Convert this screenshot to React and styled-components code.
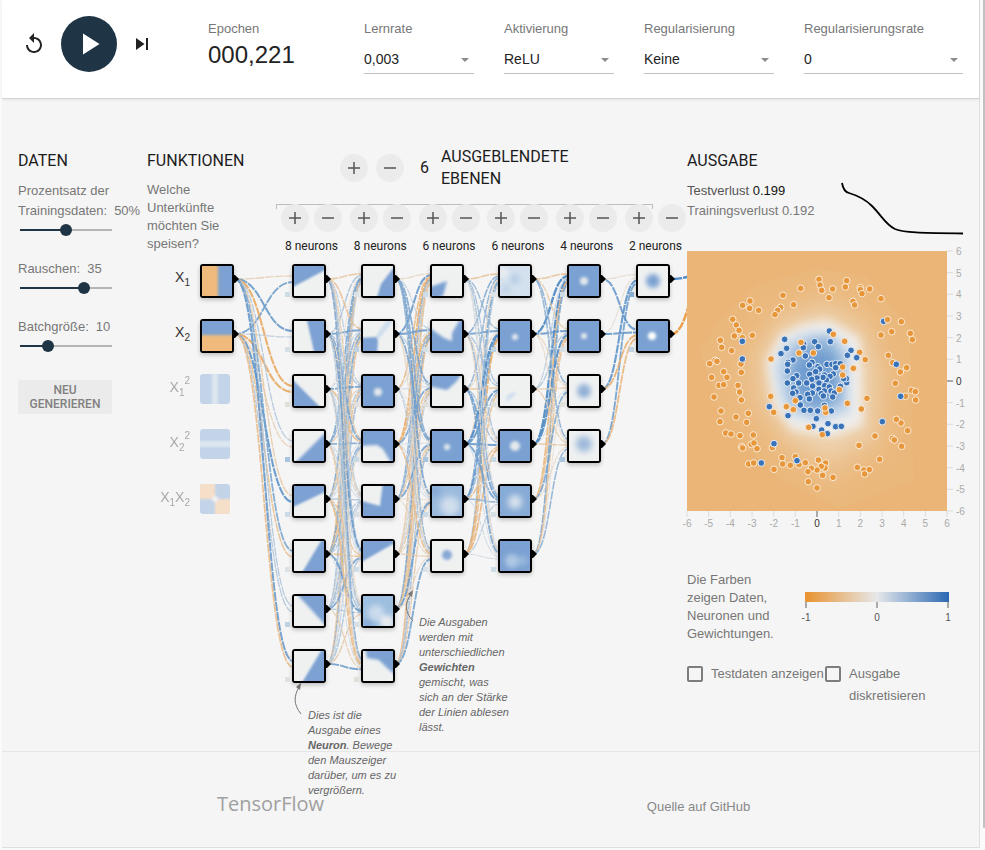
import React, { useState } from "react";
import styled, { createGlobalStyle, css } from "styled-components";

const SANS = '"Liberation Sans", Helvetica, Arial, sans-serif';
const ROBOTO = 'Roboto, "Liberation Sans", sans-serif';
const NAVY = "#1f3545";
const BLUE = "#7ba1d2";
const PALE = "#eff1f1";
const ORANGE = "#f0ba7c";

const GlobalStyle = createGlobalStyle`
  * { box-sizing: border-box; }
  body { margin: 0; background: #fafafa; font-family: ${SANS}; font-size: 13px; color: #777; }
  h1, p { margin: 0; }
  button, select { font: inherit; color: inherit; }
  svg { display: block; }
`;

/* ---------- page frame ---------- */

const Shell = styled.div`
  display: flex;
  gap: 3px;
  padding-left: 2px;
`;

const Page = styled.div`
  flex: 1;
  min-width: 978px;
  background: #f5f5f5;
  border-right: 1px solid #dedede;
  border-bottom: 1px solid #dedede;
`;

const ScrollThumb = styled.div`
  width: 2px;
  height: calc(100vh - 22px);
  background: #c1c1c1;
  border-radius: 0 0 2px 2px;
`;

/* ---------- top bar ---------- */

const TopBar = styled.header`
  display: flex;
  align-items: flex-start;
  padding: 16px 16px 24px;
  background: #fff;
  border-bottom: 1px solid #d4d4d4;
  box-shadow: 0 1px 3px rgba(0, 0, 0, 0.08);
`;

const Transport = styled.div`
  display: flex;
  align-items: center;
  width: 190px;
  color: #222;
`;

const IconButton = styled.button`
  display: grid;
  place-items: center;
  width: 28px;
  height: 28px;
  margin: 0 2px;
  padding: 0;
  border: 0;
  background: none;
  cursor: pointer;
`;

const PlayButton = styled(IconButton)`
  width: 56px;
  height: 56px;
  margin: 0 9px 0 11px;
  border-radius: 50%;
  background: ${NAVY};
  color: #fff;
`;

const Epoch = styled.div`
  width: 156px;
  padding-top: 4px;
`;

const FieldName = styled.span`
  display: block;
  line-height: 18px;
`;

const EpochNumber = styled.output`
  display: block;
  margin-top: 3px;
  font-size: 24px;
  line-height: 28px;
  color: #222;
`;

const Fields = styled.div`
  display: grid;
  flex: 1;
  grid-template-columns: 110px 110px 130px 1fr;
  gap: 30px;
  padding-top: 4px;
`;

const Picker = styled.div`
  display: grid;
  align-items: center;
  height: 28px;
  margin-top: 8px;
  border-bottom: 1px solid #c2c2c2;
  > * { grid-area: 1 / 1; }
  svg { justify-self: end; margin-right: 5px; pointer-events: none; }
`;

const Select = styled.select`
  width: 100%;
  height: 26px;
  padding: 0 0 2px;
  border: 0;
  background: transparent;
  appearance: none;
  font-size: 14px;
  color: #222;
`;

/* ---------- main columns ---------- */

const Main = styled.main`
  display: grid;
  grid-template-columns: 129px 540px 276px;
  justify-content: center;
  padding: 47px 16px 44px;
`;

const Column = styled.section`
  padding-top: 4px;
`;

const Title = styled.h1`
  margin-bottom: 9px;
  font: 400 16px/22px ${ROBOTO};
  color: #1c1c1c;
`;

const SliderBlock = styled.label`
  display: block;
  width: 94px;
  margin-bottom: 20px;
  line-height: 20px;
  span { display: block; white-space: nowrap; }
  b { margin-left: 7px; font-weight: 400; }
`;

const Slider = styled.input`
  display: block;
  width: 92px;
  height: 18px;
  margin: 0 0 0 2px;
  appearance: none;
  background: linear-gradient(to right, ${NAVY} var(--fill), #b5b5b5 var(--fill)) center / 100% 2px no-repeat;
  &::-webkit-slider-thumb {
    appearance: none;
    width: 12px;
    height: 12px;
    border-radius: 50%;
    background: ${NAVY};
  }
`;

const Regenerate = styled.button`
  width: 94px;
  margin-top: 5px;
  padding: 3px 4px;
  border: 0;
  border-radius: 2px;
  background: #ebebeb;
  font: 500 12px/14px ${ROBOTO};
  color: #808080;
`;

const Network = styled.section`
  display: grid;
  grid-template-columns: 129px 411px;
  align-content: start;
`;

const FeatureIntro = styled.div`
  padding-top: 4px;
  p { width: 86px; line-height: 18px; }
`;

const HiddenHeading = styled.div`
  display: flex;
  align-items: center;
  gap: 8px;
  padding-left: 64px;
  font: 400 16px/22px ${ROBOTO};
  color: #1c1c1c;
  h1 { width: 140px; margin-left: 4px; font: inherit; }
  output { margin-left: 8px; }
`;

const Round = styled.button`
  display: grid;
  place-items: center;
  width: 28px;
  height: 28px;
  padding: 0;
  border: 0;
  border-radius: 50%;
  background: #ebebeb;
  color: #555;
`;

const Bracket = styled.div`
  width: 377px;
  height: 5px;
  margin: 14px 0 -5px;
  border: solid #bdbdbd;
  border-width: 1px 1px 0;
`;

const LayerControls = styled.div`
  display: flex;
  justify-content: space-between;
  margin: 0 1px 0 5px;
`;

const LayerControl = styled.div`
  display: grid;
  grid-template-columns: 28px 28px;
  gap: 6px 5px;
  width: 61px;
  span {
    grid-column: 1 / 3;
    font: 400 12px/16px ${ROBOTO};
    color: #222;
    text-align: center;
    white-space: nowrap;
  }
`;

const Canvas = styled.div`
  position: relative;
  z-index: 1;
  display: flex;
  grid-column: 1 / 3;
  padding-top: 10px;
`;

const Links = styled.svg`
  position: absolute;
  inset: 0;
  z-index: -1;
`;

const Stack = styled.div`
  display: flex;
  flex-direction: column;
  gap: 21px;
`;

const FeatureRow = styled.div`
  display: flex;
  align-items: flex-start;
  gap: 10px;
  height: 34px;
  opacity: ${(p) => (p.$on ? 1 : 0.4)};
`;

const FeatureLabel = styled.span`
  display: flex;
  justify-content: flex-end;
  width: 43px;
  padding-top: 4px;
  color: #333;
  font-size: 14px;
  line-height: 18px;
  sub, sup { font-size: 10px; line-height: 10px; }
  sub { align-self: flex-end; margin-bottom: -2px; }
  sup { margin-top: -2px; }
`;

const Layers = styled.div`
  display: flex;
  justify-content: space-between;
  align-items: flex-start;
  width: 378px;
  margin-left: 58px;
`;

const Tile = styled.div`
  position: relative;
  width: ${(p) => (p.$on ? 34 : 30)}px;
  height: ${(p) => (p.$on ? 34 : 30)}px;
  > svg:first-child { border-radius: ${(p) => (p.$on ? 1 : 3)}px; overflow: hidden; }
  ${(p) =>
    p.$on &&
    css`
      border: 2px solid #000;
      border-radius: 3px;
      box-shadow: 0 2px 4px rgba(0, 0, 0, 0.22);
      background: ${PALE};
    `}
`;

const Port = styled.svg`
  position: absolute;
  left: 31px;
  top: 9px;
`;

const Bias = styled.i`
  position: absolute;
  left: -9px;
  top: 26px;
  width: 5px;
  height: 5px;
  background: ${(p) => p.$color};
`;

const Callout = styled.p`
  position: absolute;
  left: ${(p) => p.$x}px;
  top: ${(p) => p.$y}px;
  width: 92px;
  font-size: 11px;
  font-style: italic;
  line-height: 15px;
  color: #666;
  b { font-weight: 700; }
`;

/* ---------- output ---------- */

const LossRow = styled.div`
  display: flex;
  justify-content: space-between;
  height: 64px;
  line-height: 20px;
  strong { font-weight: 400; color: #111; }
  em { font-style: normal; color: #555; }
  p { white-space: nowrap; }
`;

const LegendRow = styled.div`
  display: grid;
  grid-template-columns: 108px 1fr;
  margin-top: 40px;
  line-height: 18px;
  p { width: 94px; }
  svg { margin-top: 21px; }
`;

const Checks = styled.div`
  display: grid;
  grid-template-columns: 138px 1fr;
  margin-top: 20px;
`;

const Check = styled.label`
  display: flex;
  gap: 8px;
  line-height: 22px;
  white-space: ${(p) => (p.$wrap ? "normal" : "nowrap")};
  input {
    flex: none;
    width: 16px;
    height: 16px;
    margin: 3px 0 0;
    appearance: none;
    border: 2px solid #7d7d7d;
    border-radius: 2px;
  }
  input:checked { background: ${NAVY}; }
`;

const Footer = styled.footer`
  display: grid;
  grid-template-columns: 22% 44% 1fr;
  align-items: baseline;
  align-content: center;
  height: 96px;
  padding-top: 8px;
  border-top: 1px solid #e6e6e6;
  a { color: #888; text-decoration: none; }
`;

const Logo = styled.a`
  grid-column: 2;
  justify-self: start;
  font: 500 20px/26px "Open Sans", "Noto Sans", sans-serif;
  && { color: #a0a0a0; }
`;

/* ---------- data ---------- */

const SELECTS = [
  ["Lernrate", ["0,003", "0,01", "0,03"]],
  ["Aktivierung", ["ReLU", "Tanh", "Sigmoid"]],
  ["Regularisierung", ["Keine", "L1", "L2"]],
  ["Regularisierungsrate", ["0", "0,001", "0,01"]],
];

const poly = (points, fill = BLUE) => ({ points, fill });
const blob = (cx, cy, r, fill = PALE, opacity = 0.9) => ({ cx, cy, r, fill, opacity });
const art = (bg, shapes, soft = 1) => ({ bg, shapes, soft });

const FEATURES = [
  { base: [["X", "1"]], on: true, art: art(ORANGE, [poly("16,-5 35,-5 35,35 16,35")], 2) },
  { base: [["X", "2"]], on: true, art: art(ORANGE, [poly("-5,-5 35,-5 35,14 -5,14")], 2) },
  { base: [["X", "1"]], sup: "2", art: art("#7ba4d8", [poly("12,-5 18,-5 18,35 12,35", "#b8d0e8")], 1) },
  { base: [["X", "2"]], sup: "2", art: art("#7ba4d8", [poly("-5,12 35,12 35,18 -5,18", "#b8d0e8")], 1) },
  {
    base: [["X", "1"], ["X", "2"]],
    art: art("#7ba4d8", [poly("-5,-5 15,-5 15,15 -5,15", "#f8bf88"), poly("15,15 35,15 35,35 15,35", "#f8bf88"), blob(15, 15, 3)], 1),
  },
];

const LAYERS = [
  [
    art(PALE, [poly("-5,-5 35,-5 35,2 -5,23")]),
    art(PALE, [poly("12,-5 35,-5 35,35 21,35")]),
    art(PALE, [poly("-5,0 -5,35 30,35")]),
    art(PALE, [poly("35,-2 35,35 -2,35")], 2),
    art(PALE, [poly("-5,-5 35,-5 35,4 -5,23")]),
    art(PALE, [poly("30,-5 35,-5 35,35 6,35")]),
    art(PALE, [poly("0,-5 35,-5 35,33")], 2),
    art(PALE, [poly("30,-5 35,-5 35,35 6,35")]),
  ],
  [
    art(PALE, [poly("35,-3 35,35 13,35 18,18 28,5")]),
    art(PALE, [poly("12,16 26,-4 32,-2 16,18", "#d0dfee"), poly("-5,17 13,16 15,19 14,35 -5,35")]),
    art(BLUE, [blob(15, 16, 4)], 2),
    art(BLUE, [poly("-5,15 14,14 20,18 30,35 -5,35", PALE)], 2),
    art(BLUE, [poly("-5,-5 20,-5 17,20 -5,14", PALE)], 1),
    art(PALE, [poly("-5,-5 35,-5 35,0 -5,23")], 1),
    art("#9fbfe0", [blob(13, 17, 8, "#cfdeee"), blob(24, 26, 7), blob(5, 28, 6, BLUE, 0.6)], 3),
    art(PALE, [poly("2,-5 35,-5 35,26 24,17 16,9 4,7", BLUE)], 2),
  ],
  [
    art(PALE, [poly("-5,22 15,15 11,30 -5,35")], 2),
    art(BLUE, [poly("-2,-5 30,-5 20,12 20,20 12,17 -2,7", PALE)], 2),
    art(PALE, [poly("-5,-5 32,-5 24,6 15,14 -5,10")], 2),
    art(BLUE, [blob(15, 16, 3)], 2),
    art("#9abadd", [blob(18, 20, 10, "#d7e2ee"), blob(3, 5, 6, BLUE, 0.7)], 4),
    art(PALE, [blob(15, 14, 5, BLUE)], 2),
  ],
  [
    art("#d3e0ed", [blob(15, 13, 5, "#b5cde5"), blob(6, 23, 4, "#bbd1e7"), blob(3, 7, 5)], 3),
    art(BLUE, [blob(15, 16, 3)], 2),
    art(PALE, [poly("6,26 7,20 14,16 16,18", "#c9daec")], 2),
    art(BLUE, [blob(15, 15, 5)], 2),
    art("#86abd6", [blob(15, 16, 7, "#e4eaef")], 4),
    art(BLUE, [blob(12, 20, 7, "#bcd2e8", 0.8), blob(23, 20, 5, "#a9c6e2", 0.6)], 3),
  ],
  [
    art(BLUE, [blob(15, 15, 4)], 2),
    art(BLUE, [blob(15, 15, 3)], 2),
    art(PALE, [blob(15, 15, 7, BLUE, 0.8)], 3),
    art(PALE, [blob(15, 13, 8, BLUE, 0.7)], 4),
  ],
  [art(PALE, [blob(15, 15, 7, BLUE, 1)], 3), art(BLUE, [blob(14, 15, 4, "#fff", 1)], 2)],
];

const BIAS = ["#cddde8", "#d6dfe4", "#e0e0db", "#a9c5dd", "#cadae7", "#dce2e5", "#bed2e2", "#e2e0dc", "#c6d8e4", "#d9e0e3"];

const COUNTS = [2, 8, 8, 6, 6, 4, 2];

// Known weights, [target][source] for each gap between layers; the rest come from a seeded generator.
const WEIGHTS = [
  [[-0.25, 0.55], [0.6, 0.2], [-0.65, -0.65], [0.25, -0.25], [-0.3, 0.65], [0.5, -0.4], [0.25, 0.25], [0.6, -0.45]],
  [[-0.35, 0.3, -0.1, 0.5, 0.5, -0.4, 0.3, -0.1], [-0.4, 0.55, 0.15, 0.4, -0.3, 0.5, 0.2, -0.4]],
  [[-0.2, 0.6, -0.45, -0.6, 0.4, -0.3, 0.2, -0.4], [0.2, 0.6, 0.1, -0.5, 0.4, -0.2, 0.5, -0.4]],
  [[-0.4, 0.45, 0.4, -0.2, 0.5, 0.3], [0.35, 0.55, -0.2, 0.75, 0.6, -0.6], [0.3, 0.3, -0.35, 0.6, 0.3, -0.4], [0.3, -0.2, 0.3, 0.6, -0.4, -0.5]],
  [[-0.4, 0.75, 0.2, 0.75, -0.5, 0.5], [-0.3, 0.6, 0.25, 0.7, -0.4, -0.4], [0.4, -0.2, -0.3, 0.1, 0.5, -0.1], [0.4, -0.15, -0.25, -0.3, -0.15, 0.4]],
  [[-0.15, -0.12, 0.65, 0.55], [0.6, 0.6, -0.55, -0.5]],
];

const mix = (to, t) => {
  const from = [227, 229, 230];
  return `rgb(${from.map((v, i) => Math.round(v + (to[i] - v) * t)).join(",")})`;
};

const weightColor = (w) => mix(w > 0 ? [38, 112, 186] : [234, 144, 42], Math.min(1, Math.abs(w) * 1.15));

const columnX = (i) => 145 + 68.8 * (i - 1);
const rowY = (r) => 25 + 55 * r;

function buildLinks() {
  let seed = 29;
  const random = () => {
    seed = (seed * 16807) % 2147483647;
    return seed / 2147483647;
  };
  const links = [];
  for (let layer = 0; layer < 6; layer++) {
    const sources = COUNTS[layer];
    const x0 = layer === 0 ? 88 : columnX(layer) + 35;
    const x1 = columnX(layer + 1) + 1;
    for (let target = 0; target < COUNTS[layer + 1]; target++) {
      for (let source = 0; source < sources; source++) {
        const given = WEIGHTS[layer][target];
        const sign = random() < 0.62 ? 1 : -0.8;
        const w = given ? given[source] : sign * (0.1 + 0.5 * random() ** 1.6);
        const y1 = rowY(target) + ((source - (sources - 1) / 2) / sources) * 12;
        links.push({ x0, y0: rowY(source), x1, y1, w });
      }
    }
  }
  links.push({ x0: columnX(6) + 35, y0: rowY(0), x1: 556, y1: 21, w: 0.8 });
  links.push({ x0: columnX(6) + 35, y0: rowY(1), x1: 560, y1: 22, w: -0.85 });
  return links;
}

const LINKS = buildLinks();

const ORANGE_DOTS =
  "417,118 420,135 425,151 362,145 458,147 500,122 496,141 541,143 541,149 546,161 569,147 603,176 447,173 519,184 524,195 309,166 341,194 302,202 293,211 285,224 236,211 188,196 210,183 209,205 158,238 169,255 177,271 163,288 187,293 217,286 121,301 125,322 155,332 105,361 111,364 89,371 131,395 95,412 141,412 117,436 131,434 102,471 174,436 179,456 184,480 184,397 183,372 273,357 123,513 120,545 168,531 205,520 200,547 137,579 153,582 180,587 220,585 214,613 222,609 185,620 188,624 231,626 277,623 282,611 206,672 221,669 282,688 306,653 308,672 331,676 346,650 357,674 376,668 415,660 437,669 435,684 424,679 411,690 394,685 384,695 385,725 428,706 459,712 411,744 532,682 552,690 568,689 554,702 599,658 537,616 585,588 637,595 643,600 665,619 683,572 663,549 649,538 544,507 561,475 502,490 695,451 706,455 707,480 676,469 646,430 661,396 680,383 638,368 625,346 556,359 539,337 520,385 494,304 603,285 635,275 623,239 664,245 691,280 697,299 460,283 363,307 357,339 400,339 488,381 488,405 478,449 437,517 435,504 427,584 386,562 272,469 281,517 319,500 340,509 346,482"
    .split(" ")
    .map((p) => p.split(",").map(Number));

const BLUE_DOTS =
  "611,244 187,304 187,357 268,500 282,611 244,669 351,662 607,545 662,469 649,373 530,353 513,331 502,346 448,273 451,305 404,305 415,320 314,298 320,325 303,341 371,312 370,323 376,348 339,360 324,367 323,373 322,393 396,367 388,375 389,403 414,380 419,387 407,395 441,373 456,373 467,371 481,371 467,383 460,402 433,405 450,409 439,420 429,412 411,414 395,418 350,407 339,416 322,429 341,444 348,456 338,460 356,429 380,429 398,438 417,429 434,437 448,441 481,439 500,428 499,416 491,416 417,448 433,453 453,453 463,459 458,471 424,461 430,468 397,459 383,463 388,477 360,473 361,495 324,527 372,511 391,511 413,513 433,496 454,513 409,536 399,559 425,570 442,581 444,551 467,560 484,559"
    .split(" ")
    .map((p) => p.split(",").map(Number));

const TICKS = [-6, -5, -4, -3, -2, -1, 0, 1, 2, 3, 4, 5, 6];

/* ---------- small drawings ---------- */

const Glyph = ({ size = 24, d }) => (
  <svg width={size} height={size} viewBox="0 0 24 24" fill="currentColor" aria-hidden="true">
    <path d={d} />
  </svg>
);

const Sign = ({ plus }) => (
  <svg width="12" height="12" viewBox="0 0 12 12" stroke="currentColor" strokeWidth="1.5" aria-hidden="true">
    <path d={plus ? "M0 6h12M6 0v12" : "M0 6h12"} />
  </svg>
);

const Thumb = ({ image }) => (
  <svg width="30" height="30" viewBox="0 0 30 30" aria-hidden="true">
    <rect width="30" height="30" fill={image.bg} />
    <g filter={`url(#soft${image.soft})`}>
      {image.shapes.map((s, i) =>
        s.points ? (
          <polygon key={i} points={s.points} fill={s.fill} />
        ) : (
          <circle key={i} cx={s.cx} cy={s.cy} r={s.r} fill={s.fill} opacity={s.opacity} />
        )
      )}
    </g>
  </svg>
);

const Node = ({ image, bias }) => (
  <Tile $on>
    <Thumb image={image} />
    <Port width="6" height="8" viewBox="0 0 6 8" aria-hidden="true">
      <path d="M0 0h2l4 4-4 4H0z" />
    </Port>
    {bias && <Bias $color={bias} />}
  </Tile>
);

function LinkDrawing() {
  return (
    <Links width="540" height="490" viewBox="0 0 540 490" fill="none" aria-hidden="true">
      <defs>
        {[1, 2, 3, 4].map((n) => (
          <filter key={n} id={`soft${n}`} x="-100%" y="-100%" width="300%" height="300%">
            <feGaussianBlur stdDeviation={n * 0.8} />
          </filter>
        ))}
      </defs>
      {LINKS.map((l, i) => {
        const mid = (l.x0 + l.x1) / 2;
        return (
          <path
            key={i}
            d={`M${l.x0} ${l.y0}C${mid} ${l.y0} ${mid} ${l.y1} ${l.x1} ${l.y1}`}
            stroke={weightColor(l.w)}
            strokeWidth={0.8 + Math.abs(l.w) * 2}
            strokeDasharray="9 1"
            strokeDashoffset={i * 3}
            opacity="0.85"
          />
        );
      })}
      <g stroke="#777" strokeWidth="1">
        <path d="M154 460c-8-10-7-18-2-27" />
        <path d="M266 367c-9-10-8-18-2-27" />
      </g>
      <path d="M154 429l-1 7-4-3zM266 336l-1 7-4-3z" fill="#777" />
    </Links>
  );
}

const LossChart = () => (
  <svg width="122" height="56" viewBox="0 0 122 56" fill="none" aria-label="Verlustkurve">
    <path
      d="M1 2C2 8 4 11 8 12C18 15 24 18 31 25C41 35 45 44 54 48C64 52 82 52 122 52.500"
      stroke="#000"
      strokeWidth="1.800"
    />
  </svg>
);

function HeatMap() {
  return (
    <svg width="276" height="286" overflow="visible" aria-label="Ausgabe des Netzes">
      <defs>
        <clipPath id="plot"><rect y="6" width="260" height="260" /></clipPath>
        <filter id="haze1" x="-30%" y="-30%" width="160%" height="160%"><feGaussianBlur stdDeviation="14" /></filter>
        <filter id="haze2" x="-30%" y="-30%" width="160%" height="160%"><feGaussianBlur stdDeviation="26" /></filter>
      </defs>
      <g clipPath="url(#plot)">
        <g transform="translate(-7 -5) scale(0.33333)">
          <rect x="21" y="33" width="780" height="780" fill="#ebb577" />
          <path d="M110 250L240 130L420 85L560 110L690 260L700 720L480 805L300 720L130 560L60 330Z" fill="#ebb87c" />
          <g filter="url(#haze2)">
            <path d="M200 300L290 200L440 140L580 220L640 400L620 620L460 740L300 640L200 520L160 380Z" fill="#ebbf8a" />
            <path d="M240 345L305 245L440 200L550 270L590 400L580 590L450 660L330 600L250 480Z" fill="#edd0aa" />
          </g>
          <g filter="url(#haze1)">
            <path d="M258 370L300 285L375 250L445 240L540 295L545 400L550 555L460 590L335 570L282 500Z" fill="#efeeec" />
            <path d="M282 378L315 305L380 275L450 275L510 320L508 400L512 520L420 548L328 528L298 470Z" fill="#c4d7ea" />
            <path d="M315 390L345 320L440 285L490 350L488 490L410 525L335 490Z" fill="#8fb3d9" />
            <path d="M345 385L390 325L460 345L465 465L400 495L350 450Z" fill="#6f9dd0" />
          </g>
          {ORANGE_DOTS.slice(0, -20).map(([x, y], i) => (
            <circle key={`o${i}`} cx={x} cy={y} r="10" fill="#e8963a" stroke="#f8ebda" strokeWidth="3" />
          ))}
          {BLUE_DOTS.map(([x, y], i) => (
            <circle key={`b${i}`} cx={x} cy={y} r="10" fill="#3a72b8" stroke="#e6edf5" strokeWidth="3" />
          ))}
          {ORANGE_DOTS.slice(-20).map(([x, y], i) => (
            <circle key={`t${i}`} cx={x} cy={y} r="10" fill="#e8963a" stroke="#f8ebda" strokeWidth="3" />
          ))}
        </g>
      </g>
      <g fontFamily={SANS} fontSize="10">
        {TICKS.map((t) => {
          const x = ((t + 6) * 260) / 12;
          const y = 266 - x;
          const ink = t === 0 ? "#333" : "#aaa";
          const line = t === 0 ? "#aaa" : "#dcdcdc";
          return (
            <g key={t}>
              <path d={`M${x} 266v6M260 ${y}h6`} stroke={line} strokeWidth={t === 0 ? 2 : 1} />
              <text x={x} y="282" textAnchor="middle" fill={ink}>{t}</text>
              <text x="269" y={y + 4} fill={ink}>{t}</text>
            </g>
          );
        })}
      </g>
    </svg>
  );
}

const Legend = () => (
  <svg width="168" height="40" viewBox="0 0 168 40" aria-label="Farbskala">
    <defs>
      <linearGradient id="scale">
        <stop offset="0" stopColor="#e8922e" />
        <stop offset="0.5" stopColor="#e6e8ea" />
        <stop offset="1" stopColor="#2b68b3" />
      </linearGradient>
    </defs>
    <rect x="10" width="144" height="10" fill="url(#scale)" />
    {[[-1, 11], [0, 82], [1, 153]].map(([n, x]) => (
      <g key={n}>
        <path d={`M${x} 10v6`} stroke="#aaa" strokeWidth="2" />
        <text x={x} y="29" textAnchor="middle" fontFamily={SANS} fontSize="10" fill="#555">{n}</text>
      </g>
    ))}
  </svg>
);

function Range({ name, min, max, start, unit = "" }) {
  const [value, setValue] = useState(start);
  const fill = `${((value - min) / (max - min)) * 100}%`;
  return (
    <SliderBlock>
      {name.map((line, i) => (
        <span key={line}>
          {line}
          {i === name.length - 1 && <b>{value}{unit}</b>}
        </span>
      ))}
      <Slider
        type="range"
        min={min}
        max={max}
        value={value}
        style={{ "--fill": fill }}
        onChange={(e) => setValue(Number(e.target.value))}
      />
    </SliderBlock>
  );
}

export default function App() {
  return (
    <>
      <GlobalStyle />
      <Shell>
        <Page>
          <TopBar>
            <Transport>
              <IconButton aria-label="Zurücksetzen">
                <Glyph d="M12 5V1L7 6l5 5V7c3.300 0 6 2.700 6 6s-2.700 6-6 6-6-2.700-6-6H4c0 4.400 3.600 8 8 8s8-3.600 8-8-3.600-8-8-8z" />
              </IconButton>
              <PlayButton aria-label="Start">
                <Glyph size={36} d="M8 5v14l11-7z" />
              </PlayButton>
              <IconButton aria-label="Schritt">
                <Glyph d="M6 18l8.500-6L6 6v12zM16 6v12h2V6h-2z" />
              </IconButton>
            </Transport>
            <Epoch>
              <FieldName>Epochen</FieldName>
              <EpochNumber>000,221</EpochNumber>
            </Epoch>
            <Fields>
              {SELECTS.map(([name, options]) => (
                <label key={name}>
                  <FieldName>{name}</FieldName>
                  <Picker>
                    <Select>{options.map((o) => <option key={o}>{o}</option>)}</Select>
                    <svg width="8" height="4" viewBox="0 0 8 4" aria-hidden="true"><path d="M0 0h8L4 4z" fill="#8c8c8c" /></svg>
                  </Picker>
                </label>
              ))}
            </Fields>
          </TopBar>

          <Main>
            <Column>
              <Title>DATEN</Title>
              <Range name={["Prozentsatz der", "Trainingsdaten:"]} min={10} max={90} start={50} unit="%" />
              <Range name={["Rauschen:"]} min={0} max={48} start={35} />
              <Range name={["Batchgröße:"]} min={1} max={34} start={10} />
              <Regenerate>NEU GENERIEREN</Regenerate>
            </Column>

            <Network>
              <FeatureIntro>
                <Title>FUNKTIONEN</Title>
                <p>Welche Unterkünfte möchten Sie speisen?</p>
              </FeatureIntro>
              <div>
                <HiddenHeading>
                  <Round aria-label="Ebene hinzufügen"><Sign plus /></Round>
                  <Round aria-label="Ebene entfernen"><Sign /></Round>
                  <output>6</output>
                  <h1>AUSGEBLENDETE EBENEN</h1>
                </HiddenHeading>
                <Bracket />
                <LayerControls>
                  {LAYERS.map((layer, i) => (
                    <LayerControl key={i}>
                      <Round aria-label="Neuron hinzufügen"><Sign plus /></Round>
                      <Round aria-label="Neuron entfernen"><Sign /></Round>
                      <span>{layer.length} neurons</span>
                    </LayerControl>
                  ))}
                </LayerControls>
              </div>

              <Canvas>
                <LinkDrawing />
                <Stack>
                  {FEATURES.map((f, i) => (
                    <FeatureRow key={i} $on={f.on}>
                      <FeatureLabel>
                        {f.base.map(([letter, n]) => (
                          <React.Fragment key={n}>{letter}<sub>{n}</sub></React.Fragment>
                        ))}
                        {f.sup && <sup>{f.sup}</sup>}
                      </FeatureLabel>
                      {f.on ? <Node image={f.art} /> : <Tile><Thumb image={f.art} /></Tile>}
                    </FeatureRow>
                  ))}
                </Stack>
                <Layers>
                  {LAYERS.map((layer, i) => (
                    <Stack key={i}>
                      {layer.map((image, j) => (
                        <Node
                          key={j}
                          image={image}
                          bias={i === 5 && j === 0 ? "#86acd0" : BIAS[(i * 5 + j) % BIAS.length]}
                        />
                      ))}
                    </Stack>
                  ))}
                </Layers>
                <Callout $x={161} $y={454}>
                  Dies ist die Ausgabe eines <b>Neuron</b>. Bewege den Mauszeiger darüber, um es zu vergrößern.
                </Callout>
                <Callout $x={272} $y={361}>
                  Die Ausgaben werden mit unterschiedlichen <b>Gewichten</b> gemischt, was sich an der Stärke der Linien ablesen lässt.
                </Callout>
              </Canvas>
            </Network>

            <Column>
              <Title>AUSGABE</Title>
              <LossRow>
                <div>
                  <p><em>Testverlust</em> <strong>0.199</strong></p>
                  <p>Trainingsverlust 0.192</p>
                </div>
                <LossChart />
              </LossRow>
              <HeatMap />
              <LegendRow>
                <p>Die Farben zeigen Daten, Neuronen und Gewichtungen.</p>
                <Legend />
              </LegendRow>
              <Checks>
                <Check><input type="checkbox" />Testdaten anzeigen</Check>
                <Check $wrap><input type="checkbox" />Ausgabe diskretisieren</Check>
              </Checks>
            </Column>
          </Main>

          <Footer>
            <Logo href="#tensorflow">TensorFlow</Logo>
            <a href="#quelle">Quelle auf GitHub</a>
          </Footer>
        </Page>
        <ScrollThumb />
      </Shell>
    </>
  );
}
